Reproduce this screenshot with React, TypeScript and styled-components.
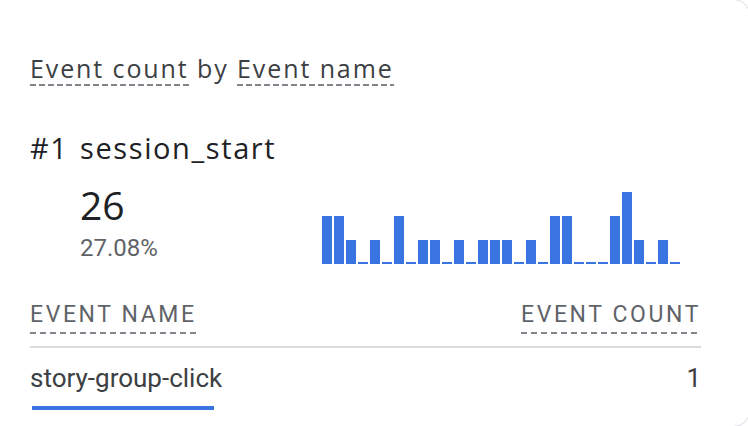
import React from "react";
import styled, { createGlobalStyle } from "styled-components";

const GlobalStyle = createGlobalStyle`
  html, body {
    margin: 0;
    padding: 0;
    background: #ffffff;
    overflow: hidden;
  }
`

const headingFont = `"Open Sans", "Noto Sans", Arial, sans-serif`
const bodyFont = `Roboto, "Liberation Sans", Arial, sans-serif`

const Card = styled.div`
  box-sizing: border-box;
  width: 790px;
  height: 428px;
  margin: -1px 0 0 -40px;
  padding: 52px 48px 0 69px;
  border: 1px solid #dadce0;
  border-radius: 16px;
  background: #fff;
`

const Title = styled.div`
  font-family: ${headingFont};
  font-size: 25px;
  line-height: 32px;
  letter-spacing: 1.9px;
  color: #3c4043;
  white-space: nowrap;
`

const Dimension = styled.span<{ $dash?: number }>`
  display: inline-block;
  padding-bottom: 2px;
  background-image: repeating-linear-gradient(
    to right,
    #80868b 0 6px,
    transparent 6px ${p => p.$dash ?? 9}px
  );
  background-size: 100% 2px;
  background-position: left bottom;
  background-repeat: no-repeat;
`

const Rank = styled.div`
  display: grid;
  grid-template-columns: 50px auto;
  margin-top: 44px;
  font-family: ${headingFont};
  font-size: 29px;
  line-height: 36px;
  letter-spacing: 1.6px;
  color: #202124;
`

const Stats = styled.div`
  display: flex;
  align-items: flex-end;
  margin-top: 17px;
  padding-left: 50px;
`

const Metric = styled.div`
  width: 242px;
  padding-bottom: 2px;
`

const Big = styled.div`
  font-family: ${headingFont};
  font-size: 39px;
  line-height: 44px;
  color: #202124;
`

const Percent = styled.div`
  margin-top: 7px;
  font-family: ${bodyFont};
  font-size: 24px;
  line-height: 28px;
  color: #5f6368;
`

const Spark = styled.div`
  display: flex;
  align-items: flex-end;
  gap: 2px;
  height: 72px;
`

const Bar = styled.div`
  width: 10px;
  background: #3a74e0;
`

const HeaderRow = styled.div`
  display: flex;
  justify-content: space-between;
  margin-top: 37px;
  padding-bottom: 12px;
  border-bottom: 2px solid #dadce0;
`

const HeaderCell = styled(Dimension)`
  font-family: ${bodyFont};
  font-size: 23px;
  line-height: 28px;
  letter-spacing: 2.6px;
  text-transform: uppercase;
  color: #5f6368;
  padding-bottom: 5px;
`

const Row = styled.div`
  display: flex;
  justify-content: space-between;
  margin-top: 14px;
  font-family: ${bodyFont};
  font-size: 26px;
  line-height: 32px;
  color: #3c4043;
`

const ShareBar = styled.div`
  height: 4px;
  margin: 12px 0 0 2px;
  background: #3a74e0;
`

const series = [2, 2, 1, 0, 1, 0, 2, 0, 1, 1, 0, 1, 0, 1, 1, 1, 0, 1, 0, 2, 2, 0, 0, 0, 2, 3, 1, 0, 1, 0]

export default function App() {
  const max = Math.max(...series)
  return (
    <>
      <GlobalStyle />
      <Card>
        <Title>
          <Dimension>Event count</Dimension> by <Dimension>Event name</Dimension>
        </Title>
        <Rank>
          <span>#1</span>
          <span>session_start</span>
        </Rank>
        <Stats>
          <Metric>
            <Big>26</Big>
            <Percent>27.08%</Percent>
          </Metric>
          <Spark>
            {series.map((v, i) => (
              <Bar key={i} style={{ height: v === 0 ? 2 : (v / max) * 72 }} />
            ))}
          </Spark>
        </Stats>
        <HeaderRow>
          <HeaderCell $dash={10}>Event name</HeaderCell>
          <HeaderCell $dash={10}>Event count</HeaderCell>
        </HeaderRow>
        <Row>
          <span>story-group-click</span>
          <span>1</span>
        </Row>
        <ShareBar style={{ width: 182 }} />
      </Card>
    </>
  );
}
